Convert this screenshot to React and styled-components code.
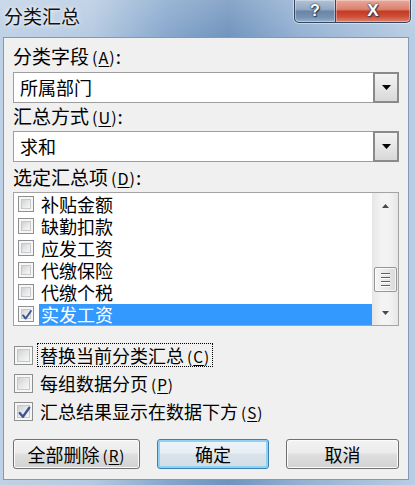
import React from "react";
import styled, { createGlobalStyle } from "styled-components";

const Global = createGlobalStyle`
  html, body { margin: 0; padding: 0; background: #fff; }
  body { font-family: "Noto Sans CJK SC", "Noto Sans", sans-serif; }
`;

const Window = styled.div`
  width: 415px;
  height: 485px;
  box-sizing: border-box;
  display: flex;
  flex-direction: column;
  padding: 0 6px 5px 3px;
  overflow: hidden;
  background:
    linear-gradient(180deg, rgba(255,255,255,0.18) 0%, rgba(255,255,255,0) 40px),
    linear-gradient(90deg, #bfd1e6 0%, #b5cae1 22%, #86a7cc 40%, #6f93bd 55%, #93b0d2 72%, #b9cde3 100%);
`;

const TitleBar = styled.div`
  height: 37px;
  flex-shrink: 0;
  display: flex;
  justify-content: space-between;
  align-items: flex-start;
`;

const TitleText = styled.div`
  margin: 4px 0 0 1px;
  font-size: 19px;
  line-height: 24px;
  color: #111;
  text-shadow: 0 0 6px rgba(255,255,255,0.9), 0 0 3px rgba(255,255,255,0.8);
`;

const CaptionButtons = styled.div`
  display: flex;
  margin-right: -2px;
  box-shadow: 0 0 0 1px rgba(255,255,255,0.45);
  border-radius: 0 0 5px 5px;
`;

const CapBtn = styled.div`
  width: ${(p) => p.$w}px;
  height: 23px;
  box-sizing: border-box;
  display: flex;
  align-items: center;
  justify-content: center;
  border: 1px solid #34465c;
  border-top: none;
  border-left-width: ${(p) => (p.$close ? 0 : 1)}px;
  border-radius: ${(p) => (p.$close ? "0 0 5px 0" : "0 0 0 5px")};
  background: ${(p) =>
    p.$close
      ? "linear-gradient(180deg, #e9a899 0%, #dc8270 42%, #c53a22 52%, #cc4f38 75%, #e08370 100%)"
      : "linear-gradient(180deg, #b1c2d6 0%, #93a9c3 42%, #6a86a7 52%, #7793b4 80%, #97b1cf 100%)"};
  box-shadow: inset 0 0 0 1px rgba(255,255,255,0.35);
  font-family: "Liberation Sans", Arial, sans-serif;
  font-weight: bold;
  font-size: ${(p) => (p.$close ? 17 : 16)}px;
  color: #fff;
  text-shadow: 0 0 2px #2a3a50, 0 0 1px #2a3a50, 1px 1px 1px #2a3a50;
`;

const Client = styled.div`
  flex: 1;
  box-sizing: border-box;
  display: flex;
  flex-direction: column;
  padding: 0 9px;
  background: #f0f0f0;
  border: 1px solid #8299b6;
`;

const Label = styled.div`
  margin-top: ${(p) => p.$mt}px;
  height: 24px;
  line-height: 24px;
  font-size: 19px;
  color: #000;
  white-space: nowrap;
`;

const Key = styled.span`
  margin-left: 3px;
  letter-spacing: 1px;
  font-size: 0.85em;
  & u { text-underline-offset: 2px; }
`;

const Combo = styled.div`
  margin-top: ${(p) => p.$mt}px;
  height: 31px;
  box-sizing: border-box;
  display: flex;
  background: #fff;
  border: 1px solid #9e9e9e;
`;

const ComboText = styled.div`
  flex: 1;
  padding-left: 6px;
  line-height: 29px;
  font-size: 18px;
  color: #000;
`;

const DropBtn = styled.div`
  width: 26px;
  margin: -1px -1px -1px 0;
  box-sizing: border-box;
  border: 2px solid #8a8a8a;
  background: linear-gradient(180deg, #f3f3f3 0%, #e6e6e6 50%, #d8d8d8 100%);
  display: flex;
  align-items: center;
  justify-content: center;
`;

const ListBox = styled.div`
  margin-top: 3px;
  height: 134px;
  box-sizing: border-box;
  display: flex;
  background: #fff;
  border: 1px solid #a3a3a3;
`;

const Items = styled.div`
  flex: 1;
  display: flex;
  flex-direction: column;
`;

const Item = styled.div`
  height: 22px;
  display: flex;
  align-items: center;
  padding-left: 4px;
  gap: 5px;
`;

const ItemText = styled.span`
  flex: 1;
  height: 21px;
  line-height: 21px;
  padding-left: 2px;
  font-size: 18px;
  color: ${(p) => (p.$selected ? "#fff" : "#000")};
  background: ${(p) => (p.$selected ? "#3399ff" : "transparent")};
`;

const ScrollBar = styled.div`
  width: 26px;
  display: flex;
  flex-direction: column;
  background: linear-gradient(90deg, #e6e6e6 0%, #f3f3f3 35%, #f3f3f3 65%, #e6e6e6 100%);
`;

const ScrollBtn = styled.div`
  height: 25px;
  display: flex;
  align-items: center;
  justify-content: center;
`;

const Track = styled.div`
  flex: 1;
  display: flex;
  flex-direction: column;
  justify-content: flex-end;
  align-items: center;
  padding-bottom: 8px;
`;

const Thumb = styled.div`
  width: 23px;
  height: 25px;
  box-sizing: border-box;
  border: 1px solid #969696;
  border-radius: 2px;
  background: linear-gradient(90deg, #f5f5f5 0%, #e9e9e9 50%, #d9d9d9 100%);
  box-shadow: inset 0 0 0 1px rgba(255,255,255,0.7);
  display: flex;
  flex-direction: column;
  align-items: center;
  justify-content: center;
  gap: 2px;
`;

const Grip = styled.span`
  width: 9px;
  height: 1px;
  background: #5f5f5f;
  border-bottom: 1px solid #fff;
`;

const Box = styled.span`
  position: relative;
  width: ${(p) => p.$size}px;
  height: ${(p) => p.$size}px;
  flex-shrink: 0;
  box-sizing: border-box;
  display: flex;
  padding: 2px;
  border: 1px solid #8e8f8f;
  background: #f6f6f6;
  &::before {
    content: "";
    flex: 1;
    border: 1px solid #c6c8cb;
    background: linear-gradient(135deg, #cfd1d4 0%, #e6e7e8 50%, #f8f8f8 100%);
  }
`;

const Tick = styled.svg`
  position: absolute;
  left: 1px;
  top: 1px;
`;

const Options = styled.div`
  margin-top: 17px;
  display: flex;
  flex-direction: column;
  gap: 4px;
`;

const CheckRow = styled.div`
  height: 24px;
  display: flex;
  align-items: center;
  gap: 4px;
  padding-left: 1px;
`;

const CheckText = styled.span`
  padding: 0 2px;
  height: 22px;
  line-height: 22px;
  font-size: 18px;
  color: #000;
  white-space: nowrap;
  border: 1px dotted ${(p) => (p.$focus ? "#000" : "transparent")};
`;

const ButtonRow = styled.div`
  margin-top: 16px;
  display: flex;
  gap: 17px;
`;

const Btn = styled.button`
  width: ${(p) => p.$w}px;
  height: 30px;
  padding: 0;
  font-family: inherit;
  font-size: 18px;
  color: #000;
  border-radius: 3px;
  border: 1px solid ${(p) => (p.$default ? "#3d7fb3" : "#707070")};
  background: ${(p) =>
    p.$default
      ? "linear-gradient(180deg, #eef4f8 0%, #e6eef4 45%, #d9e3ea 52%, #d2dde5 100%)"
      : "linear-gradient(180deg, #f3f3f3 0%, #ebebeb 45%, #dedede 52%, #d2d2d2 100%)"};
  box-shadow: inset 0 0 0 ${(p) => (p.$default ? "2px #8ed2f2" : "1px #fbfbfb")};
`;

const Triangle = ({ up, w = 9, h = 5, color = "#000" }) => (
  <svg width={w} height={h} viewBox={`0 0 ${w} ${h}`}>
    <polygon
      points={up ? `0,${h} ${w},${h} ${w / 2},0` : `0,0 ${w},0 ${w / 2},${h}`}
      fill={color}
    />
  </svg>
);

const CheckBox = ({ size, checked }) => (
  <Box $size={size}>
    {checked && (
      <Tick width={size - 2} height={size - 2} viewBox="0 0 16 16">
        <path
          d="M3.5 8.5 L6.5 12 L12.5 3.5"
          fill="none"
          stroke="#3b5392"
          strokeWidth="2.2"
          strokeLinecap="round"
          strokeLinejoin="round"
        />
      </Tick>
    )}
  </Box>
);

const Mn = ({ k }) => (
  <Key>
    (<u>{k}</u>)
  </Key>
);

const items = ["补贴金额", "缺勤扣款", "应发工资", "代缴保险", "代缴个税", "实发工资"];

export default function App() {
  return (
    <>
      <Global />
      <Window>
        <TitleBar>
          <TitleText>分类汇总</TitleText>
          <CaptionButtons>
            <CapBtn $w={42}>?</CapBtn>
            <CapBtn $w={75} $close>
              X
            </CapBtn>
          </CaptionButtons>
        </TitleBar>
        <Client>
          <Label $mt={6}>
            分类字段<Mn k="A" />:
          </Label>
          <Combo $mt={4}>
            <ComboText>所属部门</ComboText>
            <DropBtn>
              <Triangle />
            </DropBtn>
          </Combo>
          <Label $mt={1}>
            汇总方式<Mn k="U" />:
          </Label>
          <Combo $mt={3}>
            <ComboText>求和</ComboText>
            <DropBtn>
              <Triangle />
            </DropBtn>
          </Combo>
          <Label $mt={3}>
            选定汇总项<Mn k="D" />:
          </Label>
          <ListBox>
            <Items>
              {items.map((t, i) => {
                const sel = i === items.length - 1;
                return (
                  <Item key={t}>
                    <CheckBox size={16} checked={sel} />
                    <ItemText $selected={sel}>{t}</ItemText>
                  </Item>
                );
              })}
            </Items>
            <ScrollBar>
              <ScrollBtn>
                <Triangle up w={7} h={4} color="#4a4a4a" />
              </ScrollBtn>
              <Track>
                <Thumb>
                  <Grip />
                  <Grip />
                  <Grip />
                  <Grip />
                </Thumb>
              </Track>
              <ScrollBtn>
                <Triangle w={7} h={4} color="#4a4a4a" />
              </ScrollBtn>
            </ScrollBar>
          </ListBox>
          <Options>
            <CheckRow>
              <CheckBox size={19} />
              <CheckText $focus>
                替换当前分类汇总<Mn k="C" />
              </CheckText>
            </CheckRow>
            <CheckRow>
              <CheckBox size={19} />
              <CheckText>
                每组数据分页<Mn k="P" />
              </CheckText>
            </CheckRow>
            <CheckRow>
              <CheckBox size={19} checked />
              <CheckText>
                汇总结果显示在数据下方<Mn k="S" />
              </CheckText>
            </CheckRow>
          </Options>
          <ButtonRow>
            <Btn $w={127}>
              全部删除<Mn k="R" />
            </Btn>
            <Btn $w={112} $default>
              确定
            </Btn>
            <Btn $w={113}>取消</Btn>
          </ButtonRow>
        </Client>
      </Window>
    </>
  );
}
